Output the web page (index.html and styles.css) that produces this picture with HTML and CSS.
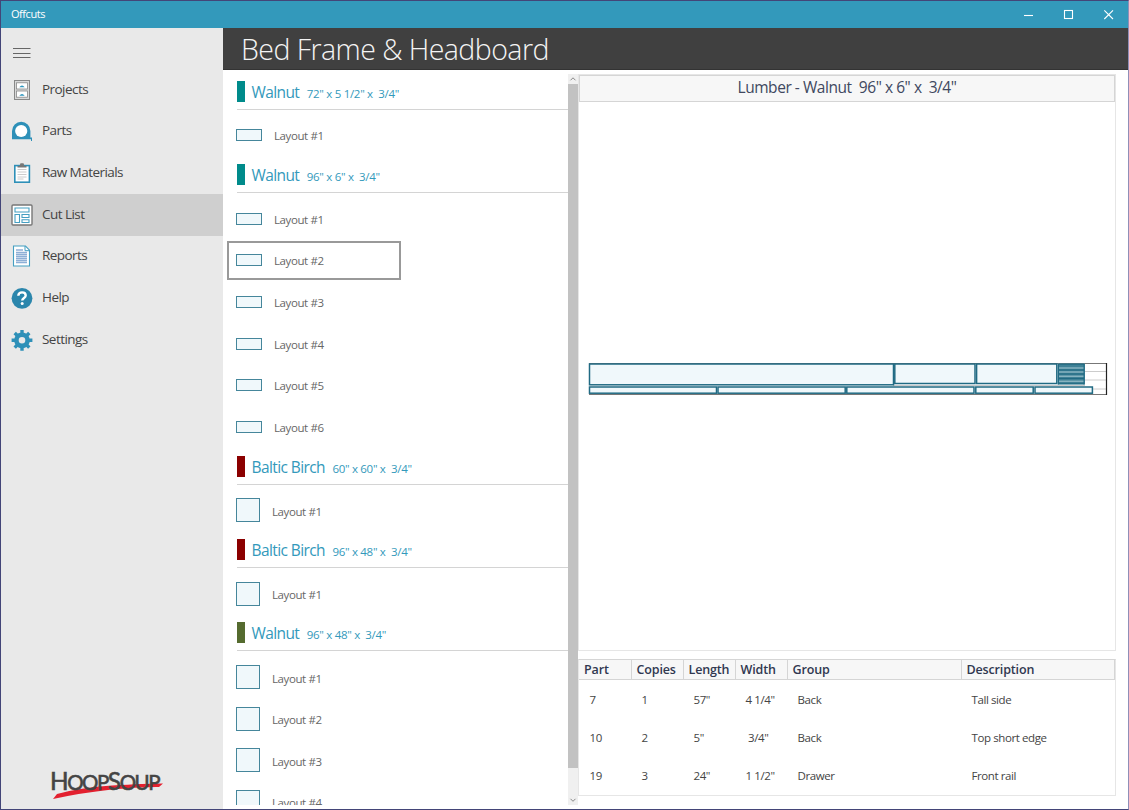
FILE: index.html
```html
<!DOCTYPE html>
<html lang="en">
<head>
  <meta charset="UTF-8">
  <meta name="viewport" content="width=device-width, initial-scale=1.0">
  <title>Offcuts</title>
  <link rel="stylesheet" href="styles.css">
</head>
<body>

  <div class="window">
    <header class="titlebar">
      <span class="app-name">Offcuts</span>
      <div class="window-buttons">
        <svg width="40" height="26" viewBox="0 0 40 26"><path d="M16 13.5H25"/></svg>
        <svg width="40" height="26" viewBox="0 0 40 26"><rect x="16.5" y="8.5" width="8" height="8"/></svg>
        <svg width="40" height="26" viewBox="0 0 40 26"><path d="M16.3 8.4L25 17M25 8.4L16.3 17"/></svg>
      </div>
    </header>

    <div class="main">
      <nav class="sidebar">
        <svg class="menu" width="18" height="12" viewBox="0 0 18 12"><path d="M0 1.5H17.5M0 6.500H17.5M0 10.5H17.5"/></svg>

        <a class="nav-item">
          <svg width="22" height="22" viewBox="0 0 22 22">
            <rect x="3.5" y="1.5" width="15" height="19" fill="#d9d9d9" stroke="#888"/>
            <rect x="5.5" y="3.8" width="11" height="6.2" fill="#fff" stroke="#888" stroke-width=".8"/>
            <rect x="5.5" y="12" width="11" height="6.2" fill="#fff" stroke="#888" stroke-width=".8"/>
            <path d="M8.3 8.3q2.7-3.4 5.4 0zM8.3 16.8q2.7-3.4 5.4 0z" fill="#2e96be"/>
          </svg>
          <span>Projects</span>
        </a>
        <a class="nav-item">
          <svg width="22" height="22" viewBox="0 0 22 22">
            <path d="M1 19.2V11a9.2 9.2 0 0 1 18.4 0v6.6H21v3.4h-1v-1.8z" fill="#2e90b8"/>
            <circle cx="10.2" cy="11" r="6.1" fill="#fff"/>
          </svg>
          <span>Parts</span>
        </a>
        <a class="nav-item">
          <svg width="22" height="22" viewBox="0 0 22 22">
            <rect x="3.8" y="3.6" width="14.6" height="16.6" fill="#fff" stroke="#2e90b8" stroke-width="1.6"/>
            <path d="M6.5 5.5V4h2l1-2.8h3l1 2.8h2v1.5z" fill="#777"/>
            <path d="M6.5 7.5h9M6.5 10h9M6.5 12.5h9M6.5 15h9M6.5 17h6" stroke="#ccc"/>
          </svg>
          <span>Raw Materials</span>
        </a>
        <a class="nav-item active">
          <svg width="22" height="22" viewBox="0 0 22 22">
            <rect x="1" y="1" width="20" height="20" rx="1" fill="#fff" stroke="#777" stroke-width="1.4"/>
            <path d="M4 4h14v4H4zM4 10.5h4.5v8H4zM11 10.5h7v3h-7zM11 15.8h7v2.7h-7z" fill="none" stroke="#459fc2" stroke-width="1.1"/>
          </svg>
          <span>Cut List</span>
        </a>
        <a class="nav-item">
          <svg width="22" height="22" viewBox="0 0 22 22">
            <path d="M2.5 1h12l4 4.2V21h-16z" fill="#fff" stroke="#459fc2" stroke-width="1.1"/>
            <path d="M14 1v4.7h4.5" fill="none" stroke="#459fc2"/>
            <path d="M5 5h7M5 7.5h11M5 9.5h11M5 11.5h11M5 13.5h11M5 15.5h11M5 17.5h11" stroke="#8eafd6" stroke-width="1.3"/>
          </svg>
          <span>Reports</span>
        </a>
        <a class="nav-item">
          <svg width="22" height="22" viewBox="0 0 22 22">
            <circle cx="11" cy="11.3" r="10.4" fill="#2b86ac"/>
            <path d="M7.3 8.8Q7.5 5.4 11.1 5.4Q14.7 5.4 14.7 8.5C14.7 10.9 11.2 11 11.2 13.6" fill="none" stroke="#fff" stroke-width="2.4"/>
            <circle cx="11.2" cy="16.6" r="1.5" fill="#fff"/>
          </svg>
          <span>Help</span>
        </a>
        <a class="nav-item">
          <svg width="22" height="22" viewBox="0 0 22 22">
            <g fill="none" stroke="#2e90b8">
              <circle cx="11" cy="11.3" r="5.6" stroke-width="4.6"/>
              <path d="M11 .9v4M11 17.7v4M.6 11.3h4M17.4 11.3h4M3.7 4l2.8 2.8M15.5 15.8l2.8 2.8M18.3 4l-2.8 2.8M6.5 15.8l-2.8 2.8" stroke-width="3.4"/>
            </g>
          </svg>
          <span>Settings</span>
        </a>

        <svg class="logo" width="118" height="42" viewBox="0 0 118 42">
          <path d="M3 39L7 34Q30 27.500 62 25.500Q95 23.500 113 23.500L109 27Q85 26.800 62 29.500Q30 33 3 39z" fill="#e3202f"/>
          <text x="0" y="30" textLength="109" lengthAdjust="spacingAndGlyphs">H<tspan class="small">OOP</tspan>S<tspan class="small">OUP</tspan></text>
        </svg>
      </nav>

      <div class="page">
        <h1>Bed Frame &amp; Headboard</h1>

        <div class="columns">
          <div class="cut-list">
            <div class="groups">
              <h2 class="group teal"><span class="name">Walnut</span><span class="size">72" x 5 1/2" x&nbsp; 3/4"</span></h2>
              <div class="layout board"><span>Layout #1</span></div>

              <h2 class="group teal"><span class="name">Walnut</span><span class="size">96" x 6" x&nbsp; 3/4"</span></h2>
              <div class="layout board"><span>Layout #1</span></div>
              <div class="layout board selected"><span>Layout #2</span></div>
              <div class="layout board"><span>Layout #3</span></div>
              <div class="layout board"><span>Layout #4</span></div>
              <div class="layout board"><span>Layout #5</span></div>
              <div class="layout board"><span>Layout #6</span></div>

              <h2 class="group red"><span class="name">Baltic Birch</span><span class="size">60" x 60" x&nbsp; 3/4"</span></h2>
              <div class="layout sheet"><span>Layout #1</span></div>

              <h2 class="group red"><span class="name">Baltic Birch</span><span class="size">96" x 48" x&nbsp; 3/4"</span></h2>
              <div class="layout sheet"><span>Layout #1</span></div>

              <h2 class="group green"><span class="name">Walnut</span><span class="size">96" x 48" x&nbsp; 3/4"</span></h2>
              <div class="layout sheet"><span>Layout #1</span></div>
              <div class="layout sheet"><span>Layout #2</span></div>
              <div class="layout sheet"><span>Layout #3</span></div>
              <div class="layout sheet"><span>Layout #4</span></div>
            </div>
            <div class="scrollbar">
              <svg width="10" height="10" viewBox="0 0 10 10"><path d="M2.5 6.3L5 3.8L7.5 6.3"/></svg>
              <div class="thumb"></div>
              <svg width="10" height="10" viewBox="0 0 10 10"><path d="M2.5 3.8L5 6.3L7.5 3.8"/></svg>
            </div>
          </div>

          <div class="detail">
            <section class="diagram">
              <h3>Lumber - Walnut&nbsp; 96" x 6" x&nbsp; 3/4"</h3>
              <svg class="board-drawing" width="520" height="34" viewBox="0 0 520 34">
                <rect x="1" y="1.5" width="517.5" height="31" fill="#fff"/>
                <path d="M497 9.5h21M497 18h21M505 27h13" stroke="#ccc"/>
                <path d="M305 23.5h192" stroke="#bbb" stroke-width=".8"/>
                <path d="M1 1.5H518.5M1 32.5H518.5" stroke="#777"/>
                <path d="M518.500 1V33" stroke="#222" stroke-width="1.2"/>
                <g class="part">
                  <rect x="1.5" y="2" width="304" height="20.8"/>
                  <rect x="306.8" y="2" width="80.2" height="19.5"/>
                  <rect x="388.6" y="2" width="80.2" height="19.5"/>
                  <rect x="1.5" y="25" width="127" height="6.2"/>
                  <rect x="130" y="25" width="127.2" height="6.2"/>
                  <rect x="258.8" y="25" width="127.2" height="6.2"/>
                  <rect x="387.8" y="25" width="57.4" height="6.2"/>
                  <rect x="447" y="25" width="57.4" height="6.2"/>
                </g>
                <rect x="469.5" y="1.5" width="27.5" height="21" fill="#3f8196"/>
                <path d="M471 6h25M471 10h25M471 14.2h25M471 19.2h25" stroke="#a9cad4"/>
                <path d="M471 2.2h25M471 8h25M471 12h25M471 16.5h25M471 21.7h25M470.5 2v20.5M496 2v20.5" stroke="#206a83"/>
              </svg>
            </section>

            <section class="parts">
              <table>
                <colgroup>
                  <col class="narrow"><col class="narrow"><col class="narrow"><col class="narrow"><col class="wide"><col>
                </colgroup>
                <thead>
                  <tr><th>Part</th><th>Copies</th><th>Length</th><th>Width</th><th>Group</th><th>Description</th></tr>
                </thead>
                <tbody>
                  <tr><td>7</td><td>1</td><td>57"</td><td>4 1/4"</td><td>Back</td><td>Tall side</td></tr>
                  <tr><td>10</td><td>2</td><td>5"</td><td>&nbsp;3/4"</td><td>Back</td><td>Top short edge</td></tr>
                  <tr><td>19</td><td>3</td><td>24"</td><td>1 1/2"</td><td>Drawer</td><td>Front rail</td></tr>
                </tbody>
              </table>
            </section>
          </div>
        </div>
      </div>
    </div>
  </div>

</body>
</html>
```

FILE: styles.css
```css
*, *::before {
  box-sizing: border-box;
}

body {
  margin: 0;
  font-family: "Open Sans", "Noto Sans", sans-serif;
  color: #444;
  background-color: #fff;
}

.window {
  height: 810px;
  border: 1px solid #434578;
  border-right-color: #8f8fb8;
  display: flex;
  flex-direction: column;
  overflow: hidden;
}

.titlebar {
  height: 27px;
  flex: none;
  display: flex;
  justify-content: space-between;
  align-items: center;
  padding-left: 10px;
  background-color: #3399bb;
  color: #fff;
}

.app-name {
  padding-bottom: 2px;
  font-size: 11px;
  font-weight: 500;
  letter-spacing: -0.45px;
}

.window-buttons {
  display: flex;
}

.window-buttons svg {
  fill: none;
  stroke: #fff;
  stroke-width: 1.1;
}

.main {
  flex: 1;
  display: flex;
  min-height: 0;
}

/* sidebar */
.sidebar {
  width: 222px;
  flex: none;
  display: flex;
  flex-direction: column;
  background-color: #e9e9e9;
}

.menu {
  margin: 19px 0 10px 12px;
  flex: none;
  stroke: #666;
  stroke-width: 1.1;
}

.nav-item {
  height: 41.67px;
  flex: none;
  display: flex;
  align-items: center;
  gap: 9px;
  padding-left: 10px;
  font-size: 13.5px;
  letter-spacing: -0.55px;
}

.nav-item span {
  padding-bottom: 2px;
}

.active {
  background-color: #cfcfcf;
}

.logo {
  margin: auto 0 7px 49px;
  flex: none;
}

.logo text {
  font-family: Lato, sans-serif;
  font-size: 25px;
  fill: #444;
  stroke: #444;
  stroke-width: 0.6;
  letter-spacing: -1.5px;
}

.logo .small {
  font-size: 21px;
}

/* page */
.page {
  flex: 1;
  display: flex;
  flex-direction: column;
  min-width: 0;
}

h1 {
  margin: 0;
  height: 42px;
  flex: none;
  padding-left: 18px;
  background-color: #404040;
  border-bottom: 1px solid #333;
  color: #f4f4f4;
  font-size: 28.5px;
  font-weight: 300;
  letter-spacing: -0.55px;
  line-height: 42px;
}

.columns {
  flex: 1;
  display: flex;
  min-height: 0;
}

.cut-list {
  width: 355px;
  flex: none;
  display: flex;
}

.groups {
  flex: 1;
  height: 734.5px;
  padding-top: 3px;
  display: flex;
  flex-direction: column;
  overflow: hidden;
}

.group {
  height: 36.6px;
  flex: none;
  margin: 0 0 5.07px 14px;
  padding-bottom: 7px;
  display: flex;
  align-items: flex-end;
  border-bottom: 1px solid #d4d4d4;
  color: #3399bb;
  font-weight: 400;
}

.group::before {
  content: "";
  width: 7.5px;
  height: 21px;
  margin-right: 7px;
}

.teal::before {
  background-color: #008b8b;
}

.red::before {
  background-color: #8b0000;
}

.green::before {
  background-color: #556b2f;
}

.name {
  margin-right: 7.5px;
  font-size: 15.5px;
  letter-spacing: -0.6px;
  line-height: 19px;
}

.size {
  font-size: 11.5px;
  letter-spacing: -0.3px;
  line-height: 16px;
}

.layout {
  width: 174px;
  height: 38.67px;
  flex: none;
  margin: 1.5px 0 1.5px 4px;
  border: 2px solid transparent;
  display: flex;
  align-items: center;
  padding-left: 7px;
  font-size: 11.5px;
  letter-spacing: -0.4px;
  color: #666;
}

.layout::before {
  content: "";
  width: 26px;
  height: 12px;
  margin-right: 12px;
  border: 1px solid #45869b;
  background-color: #f0f8fb;
}

.layout span {
  padding-top: 1px;
}

.sheet::before {
  width: 24px;
  height: 24px;
}

.sheet span {
  padding-top: 2px;
}

.selected {
  border-color: #999;
}

.scrollbar {
  width: 10px;
  height: 731px;
  margin-top: 4px;
  display: flex;
  flex-direction: column;
  justify-content: space-between;
  background-color: #f0f0f0;
}

.scrollbar svg {
  fill: none;
  stroke: #888;
}

.thumb {
  height: 684px;
  margin-bottom: auto;
  background-color: #c2c2c2;
}

/* right side */
.detail {
  flex: 1;
  padding: 4px 12px 13px 0;
  display: flex;
  flex-direction: column;
  gap: 8px;
}

.diagram {
  height: 577px;
  display: flex;
  flex-direction: column;
  align-items: center;
  border: 1px solid #e6e6e6;
}

h3 {
  width: 100%;
  height: 27px;
  margin: 0;
  background-color: #f7f7f7;
  border: 1px solid #d5d5d5;
  color: #404860;
  font-size: 15.5px;
  font-weight: 400;
  letter-spacing: -0.45px;
  line-height: 22px;
  text-align: center;
}

.board-drawing {
  margin: 259.5px 0 0 2px;
}

.part {
  fill: #f0f8fb;
  stroke: #206a83;
  stroke-width: 1.5;
}

.parts {
  flex: 1;
  border: 1px solid #e6e6e6;
  border-top-color: #d5d5d5;
}

table {
  width: 100%;
  table-layout: fixed;
  border-collapse: collapse;
}

.narrow {
  width: 52px;
}

.wide {
  width: 174px;
}

th {
  height: 19px;
  padding: 1px 0 0 5px;
  background-color: #f7f7f7;
  border: 1px solid #d5d5d5;
  border-top: 0;
  border-left: 0;
  color: #303850;
  font-size: 12.5px;
  font-weight: 600;
  letter-spacing: -0.15px;
  line-height: 18px;
  text-align: left;
}

td {
  height: 38.2px;
  padding: 1px 0 0 10.5px;
  font-size: 11.5px;
  letter-spacing: -0.4px;
}
```
